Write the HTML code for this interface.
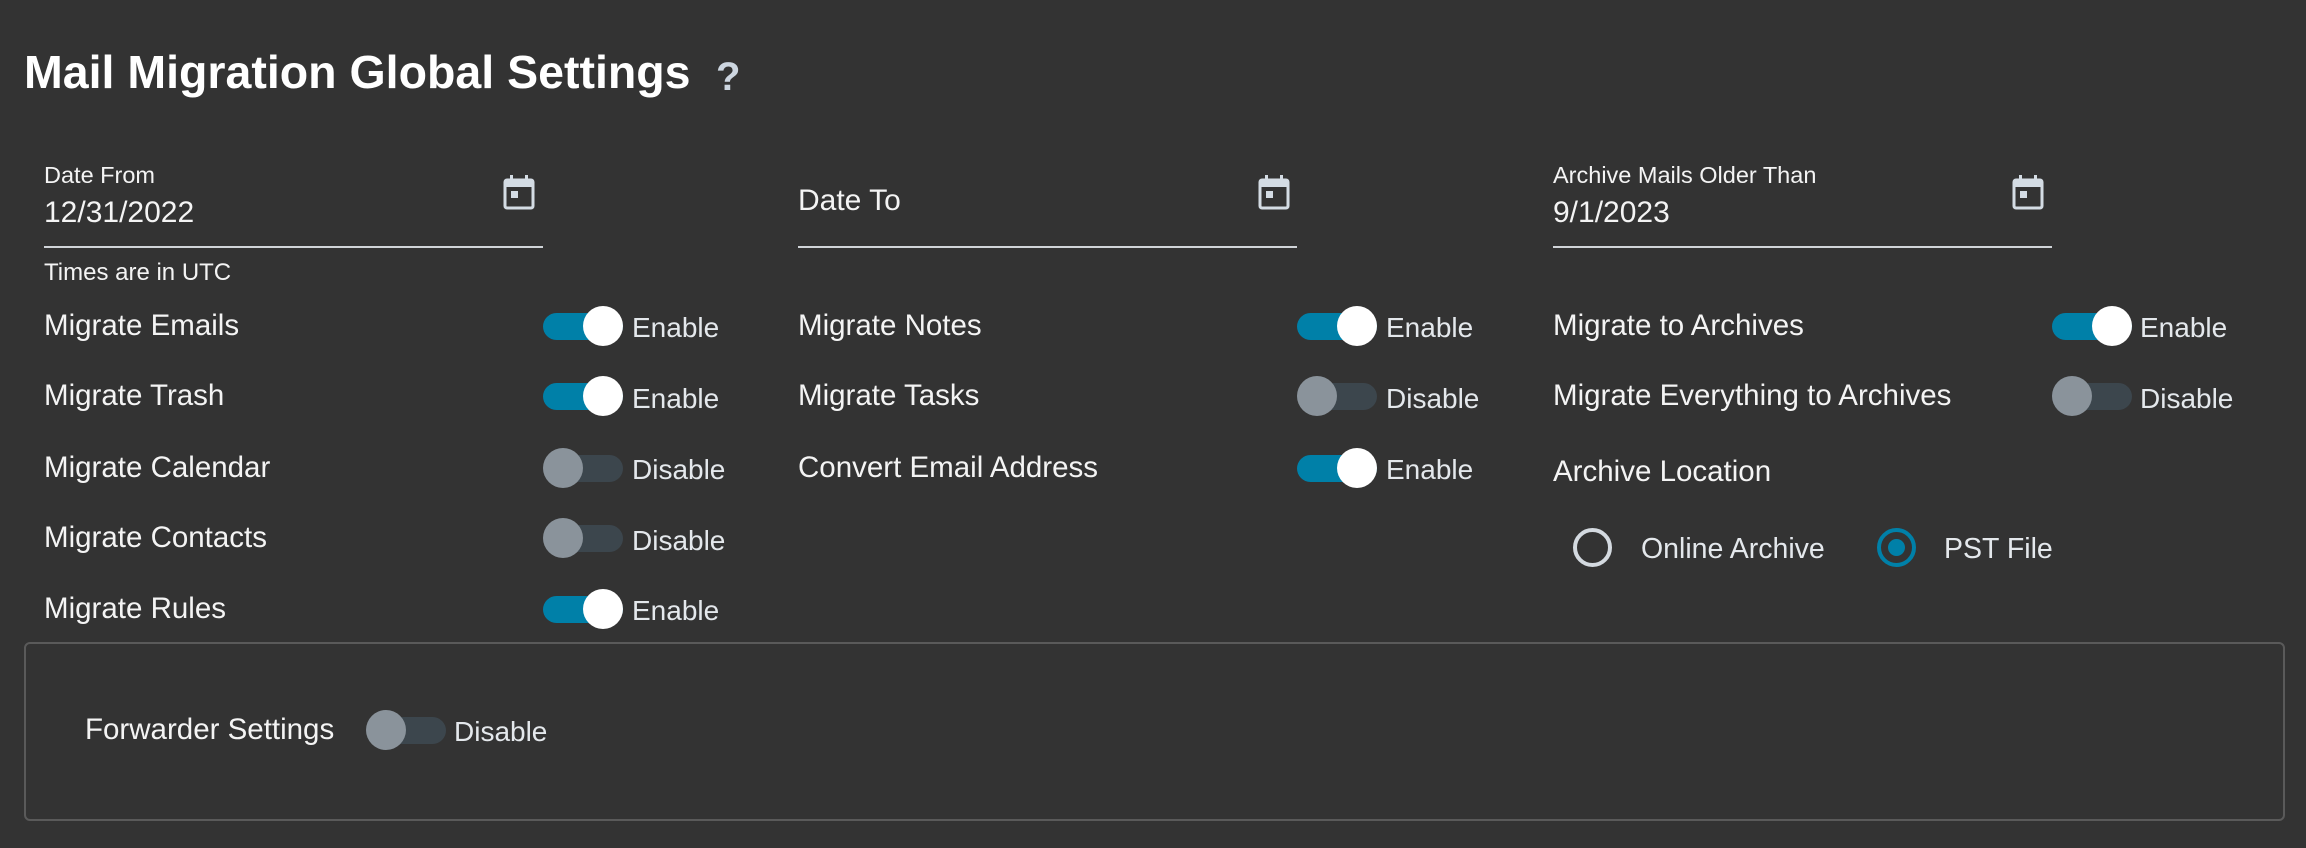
<!DOCTYPE html>
<html><head><meta charset="utf-8"><style>
*{margin:0;padding:0;box-sizing:border-box}
body{width:2306px;height:848px;background:#333333;font-family:"Liberation Sans",sans-serif;color:#f4f4f4;position:relative;overflow:hidden}
.a{position:absolute;white-space:nowrap}
.lbl{font-size:29.5px;line-height:30px;margin-top:3px}
.sm{font-size:23.5px;line-height:24px}
.val{font-size:30px;line-height:30px}
.line{position:absolute;height:2px;background:#d0d4d8}
.tg{position:absolute;width:80px;height:40px}
.tg .tr{position:absolute;left:0;top:7px;width:80px;height:27px;border-radius:14px}
.tg .th{position:absolute;top:0;width:40px;height:40px;border-radius:50%}
.on .tr{background:#0080a8}.on .th{left:40px;background:#fff}
.off .tr{background:#3c464d}.off .th{left:0;background:#8a939b}
.st{font-size:28px;line-height:30px;color:#e4e8ec;margin-top:2px}
.cal{position:absolute;width:32px;height:36px}
</style></head><body>
<div class="a" style="left:24px;top:44px;font-size:46.5px;line-height:56px;font-weight:bold;color:#fff">Mail Migration Global Settings</div>
<div class="a" style="left:716px;top:52px;font-size:40px;line-height:50px;font-weight:bold;color:#cdd6e0">?</div>

<div class="a sm" style="left:44px;top:163px">Date From</div>
<div class="a val" style="left:44px;top:198px">12/31/2022</div>
<div class="line" style="left:44px;top:246px;width:499px"></div>
<div class="a val" style="left:798px;top:186px">Date To</div>
<div class="line" style="left:798px;top:246px;width:499px"></div>
<div class="a sm" style="left:1553px;top:163px">Archive Mails Older Than</div>
<div class="a val" style="left:1553px;top:198px">9/1/2023</div>
<div class="line" style="left:1553px;top:246px;width:499px"></div>
<svg class="cal" style="left:503px;top:174px" viewBox="0 0 32 36"><rect x="2" y="6" width="28" height="28" rx="2" fill="none" stroke="#d4dce4" stroke-width="3"/><rect x="2" y="6" width="28" height="7" fill="#d4dce4"/><rect x="7" y="1" width="3" height="7" fill="#d4dce4"/><rect x="22" y="1" width="3" height="7" fill="#d4dce4"/><rect x="8" y="17" width="7" height="7" fill="#d4dce4"/></svg>
<svg class="cal" style="left:1258px;top:174px" viewBox="0 0 32 36"><rect x="2" y="6" width="28" height="28" rx="2" fill="none" stroke="#d4dce4" stroke-width="3"/><rect x="2" y="6" width="28" height="7" fill="#d4dce4"/><rect x="7" y="1" width="3" height="7" fill="#d4dce4"/><rect x="22" y="1" width="3" height="7" fill="#d4dce4"/><rect x="8" y="17" width="7" height="7" fill="#d4dce4"/></svg>
<svg class="cal" style="left:2012px;top:174px" viewBox="0 0 32 36"><rect x="2" y="6" width="28" height="28" rx="2" fill="none" stroke="#d4dce4" stroke-width="3"/><rect x="2" y="6" width="28" height="7" fill="#d4dce4"/><rect x="7" y="1" width="3" height="7" fill="#d4dce4"/><rect x="22" y="1" width="3" height="7" fill="#d4dce4"/><rect x="8" y="17" width="7" height="7" fill="#d4dce4"/></svg>
<div class="a sm" style="left:44px;top:261px;font-size:24px">Times are in UTC</div>

<div class="a lbl" style="left:44px;top:308px">Migrate Emails</div>
<div class="tg on" style="left:543px;top:306px"><div class="tr"></div><div class="th"></div></div>
<div class="a st" style="left:632px;top:311px">Enable</div>
<div class="a lbl" style="left:44px;top:378px">Migrate Trash</div>
<div class="tg on" style="left:543px;top:376px"><div class="tr"></div><div class="th"></div></div>
<div class="a st" style="left:632px;top:382px">Enable</div>
<div class="a lbl" style="left:44px;top:450px">Migrate Calendar</div>
<div class="tg off" style="left:543px;top:448px"><div class="tr"></div><div class="th"></div></div>
<div class="a st" style="left:632px;top:453px">Disable</div>
<div class="a lbl" style="left:44px;top:520px">Migrate Contacts</div>
<div class="tg off" style="left:543px;top:518px"><div class="tr"></div><div class="th"></div></div>
<div class="a st" style="left:632px;top:524px">Disable</div>
<div class="a lbl" style="left:44px;top:591px">Migrate Rules</div>
<div class="tg on" style="left:543px;top:589px"><div class="tr"></div><div class="th"></div></div>
<div class="a st" style="left:632px;top:594px">Enable</div>

<div class="a lbl" style="left:798px;top:308px">Migrate Notes</div>
<div class="tg on" style="left:1297px;top:306px"><div class="tr"></div><div class="th"></div></div>
<div class="a st" style="left:1386px;top:311px">Enable</div>
<div class="a lbl" style="left:798px;top:378px">Migrate Tasks</div>
<div class="tg off" style="left:1297px;top:376px"><div class="tr"></div><div class="th"></div></div>
<div class="a st" style="left:1386px;top:382px">Disable</div>
<div class="a lbl" style="left:798px;top:450px">Convert Email Address</div>
<div class="tg on" style="left:1297px;top:448px"><div class="tr"></div><div class="th"></div></div>
<div class="a st" style="left:1386px;top:453px">Enable</div>

<div class="a lbl" style="left:1553px;top:308px">Migrate to Archives</div>
<div class="tg on" style="left:2052px;top:306px"><div class="tr"></div><div class="th"></div></div>
<div class="a st" style="left:2140px;top:311px">Enable</div>
<div class="a lbl" style="left:1553px;top:378px">Migrate Everything to Archives</div>
<div class="tg off" style="left:2052px;top:376px"><div class="tr"></div><div class="th"></div></div>
<div class="a st" style="left:2140px;top:382px">Disable</div>
<div class="a lbl" style="left:1553px;top:454px">Archive Location</div>
<div class="a" style="left:1573px;top:528px;width:39px;height:39px;border:4px solid #d4dae0;border-radius:50%"></div>
<div class="a st" style="left:1641px;top:532px;font-size:28.5px">Online Archive</div>
<div class="a" style="left:1877px;top:528px;width:39px;height:39px;border:4px solid #0080a8;border-radius:50%"><div style="position:absolute;left:7px;top:7px;width:17px;height:17px;border-radius:50%;background:#0080a8"></div></div>
<div class="a st" style="left:1944px;top:532px;font-size:28.5px">PST File</div>

<div class="a" style="left:24px;top:642px;width:2261px;height:179px;border:2px solid #5a5a5a;border-radius:6px"></div>
<div class="a lbl" style="left:85px;top:712px">Forwarder Settings</div>
<div class="tg off" style="left:366px;top:710px"><div class="tr"></div><div class="th"></div></div>
<div class="a st" style="left:454px;top:715px">Disable</div>
</body></html>
